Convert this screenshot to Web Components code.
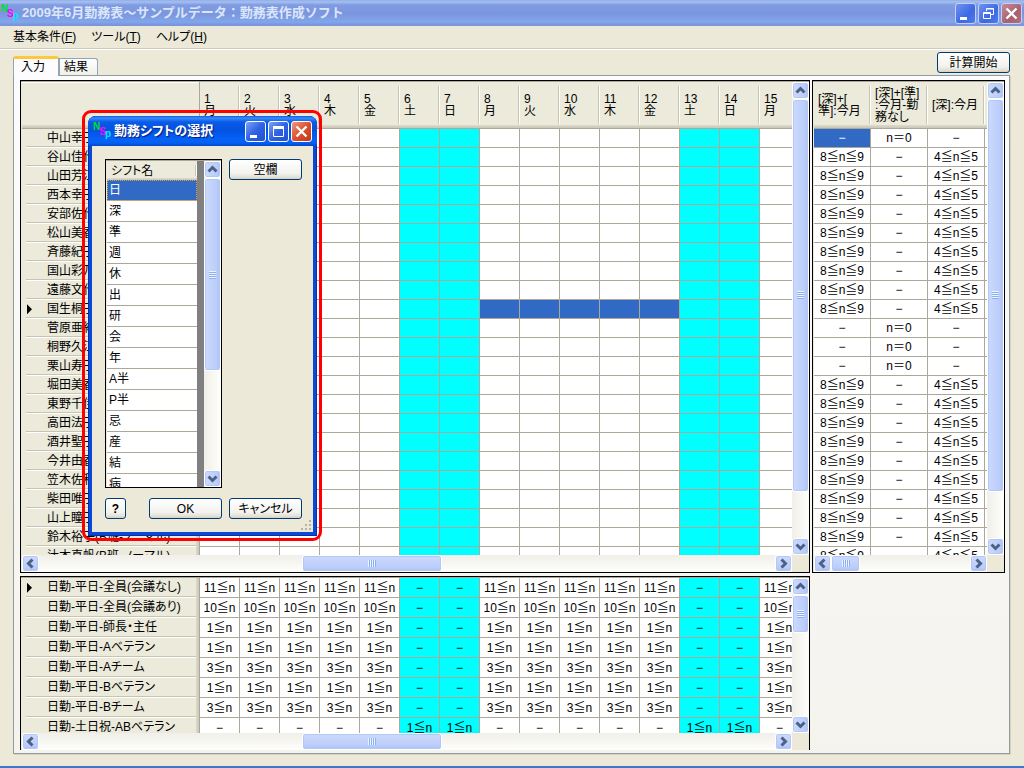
<!DOCTYPE html>
<html lang="ja">
<head>
<meta charset="utf-8">
<title>勤務表作成ソフト</title>
<style>
  body {
    margin: 0;
    background: #ece9d8;
    color: #000;
    font: 12px/18px "Liberation Sans", "Noto Sans CJK JP", sans-serif;
    font-feature-settings: "palt";
    overflow: hidden;
  }
</style>
</head>
<body>
<duty-app></duty-app>

<script>
class XpTitlebar extends HTMLElement {
  constructor() {
    super();
    this.attachShadow({ mode: "open" });
  }

  static get styles() {
    return /* css */`
      :host {
        --bar: linear-gradient(#93aeea, #a5bff0 2px, #7f9be2 5px, #7b96df 14px, #83a6ea 22px, #7b99e2 24px, #7a92d6);
        --button: linear-gradient(135deg, #6f93ef, #3c68e4 60%, #4f7cf0);
        --close: linear-gradient(135deg, #c48a97, #a8616f 60%, #b3707c);
        --edge: #c3d0f3;
        display: flex;
        align-items: center;
        height: 26px;
        padding: 0 2px 0 1px;
        background: var(--bar);
        color: #dce6fa;
        font-size: 13px;
        font-weight: bold;
        font-feature-settings: normal;
        flex: none;
      }

      :host([active]) {
        --bar: linear-gradient(#0a5ae0, #3b8cfb 2px, #0a5be8 6px, #0352e0 14px, #0663f8 24px, #0560f0 27px, #0145c8);
        --button: linear-gradient(135deg, #7ba2f5, #2f62e4 50%, #1f52d2);
        --close: linear-gradient(135deg, #f09a82, #dc5030 50%, #c23a16);
        --edge: #fff;
        height: 30px;
        padding: 0 5px;
        color: #fff;
        font-feature-settings: "palt";
        text-shadow: 1px 1px 1px #0a1883;
      }

      .logo {
        width: 18px;
        height: 18px;
        margin-right: 3px;
        text-shadow: none;
      }

      .logo text {
        font: bold 10px "Liberation Sans", sans-serif;
      }

      .title {
        flex: 1;
        white-space: nowrap;
      }

      .buttons {
        display: flex;
        gap: 2px;
      }

      button {
        width: 21px;
        height: 21px;
        padding: 0;
        border: 1px solid var(--edge);
        border-radius: 3px;
        background: var(--button);
      }

      button.close {
        background: var(--close);
      }

      button svg {
        display: block;
        width: 19px;
        height: 19px;
        fill: none;
        stroke: #fff;
      }
    `;
  }

  connectedCallback() {
    this.render();
  }

  render() {
    const size = this.hasAttribute("maximized")
      ? `<path d="M7.5 7V4.5h7v6H12M7 5h8" /><path d="M4.5 8.5h7v6h-7zM4 9.5h8" />`
      : `<path d="M4.5 4.5h10v10h-10z" /><path d="M4 5.5h11" stroke-width="3" />`;

    this.shadowRoot.innerHTML = /* html */`
    <style>${XpTitlebar.styles}</style>
    <svg class="logo" viewBox="0 0 18 18">
      <text x="0" y="8" fill="#00e020">N</text>
      <text x="6" y="13" fill="#f0f">S</text>
      <text x="12" y="15" fill="#00e8ff">p</text>
    </svg>
    <span class="title"><slot></slot></span>
    <div class="buttons">
      <button aria-label="最小化"><svg viewBox="0 0 19 19"><path d="M4 14.5h7" stroke-width="3" /></svg></button>
      <button aria-label="サイズ変更"><svg viewBox="0 0 19 19">${size}</svg></button>
      <button class="close" aria-label="閉じる"><svg viewBox="0 0 19 19"><path d="M4.5 4.5l10 10M14.5 4.5l-10 10" stroke-width="2.4" /></svg></button>
    </div>`;
  }
}

class XpMenubar extends HTMLElement {
  constructor() {
    super();
    this.attachShadow({ mode: "open" });
  }

  static get styles() {
    return /* css */`
      :host {
        display: flex;
        align-items: center;
        gap: 15px;
        height: 22px;
        padding: 0 13px;
        border-bottom: 1px solid #cdcabb;
        box-shadow: 0 1px #fff;
        margin-bottom: 1px;
        flex: none;
      }

      button {
        border: 0;
        padding: 0;
        background: none;
        color: inherit;
        font: inherit;
        font-feature-settings: inherit;
      }
    `;
  }

  connectedCallback() {
    this.shadowRoot.innerHTML = /* html */`
    <style>${XpMenubar.styles}</style>
    <button>基本条件(<u>F</u>)</button>
    <button>ツール(<u>T</u>)</button>
    <button>ヘルプ(<u>H</u>)</button>`;
  }
}

class XpButton extends HTMLElement {
  constructor() {
    super();
    this.attachShadow({ mode: "open" });
  }

  static get styles() {
    return /* css */`
      :host {
        display: block;
        width: 73px;
        height: 21px;
      }

      :host([small]) {
        width: 21px;
        font-weight: bold;
      }

      button {
        display: block;
        width: 100%;
        height: 100%;
        padding: 0;
        border: 1px solid #003c74;
        border-radius: 3px;
        background: linear-gradient(#fff, #f3f2ee 70%, #e3e0d6 90%, #d6d0c5);
        color: inherit;
        font: inherit;
        font-feature-settings: inherit;
        white-space: nowrap;
      }
    `;
  }

  connectedCallback() {
    this.shadowRoot.innerHTML = /* html */`
    <style>${XpButton.styles}</style>
    <button><slot></slot></button>`;
  }
}

class XpScrollbar extends HTMLElement {
  constructor() {
    super();
    this.attachShadow({ mode: "open" });
  }

  static get styles() {
    return /* css */`
      :host {
        --side: 90deg;
        display: flex;
        flex-direction: column;
        min-width: 0;
        min-height: 0;
        background: linear-gradient(var(--side), #f0efe9, #fefefb);
      }

      :host([horizontal]) {
        --side: 180deg;
        flex-direction: row;
      }

      button,
      .thumb {
        box-sizing: border-box;
        border: 1px solid #fff;
        border-radius: 3px;
        background: linear-gradient(var(--side), #cddafd, #b9ccfa 80%, #a9bff0);
        box-shadow: inset 0 0 0 1px #b5c8f5;
      }

      button {
        flex: none;
        width: 17px;
        height: 17px;
        padding: 0;
      }

      button svg {
        display: block;
        width: 15px;
        height: 15px;
        fill: none;
        stroke: #4d6185;
        stroke-width: 3;
      }

      .track {
        display: flex;
        flex: 1;
        flex-direction: inherit;
        min-width: 0;
        min-height: 0;
      }

      .thumb {
        display: flex;
        align-items: center;
        justify-content: center;
        min-width: 0;
        min-height: 0;
      }

      .grip {
        width: 7px;
        height: 8px;
        background: repeating-linear-gradient(#eef4fe 0 1px, #8cb0f8 1px 2px);
      }

      :host([horizontal]) .grip {
        width: 8px;
        height: 7px;
        background: repeating-linear-gradient(90deg, #eef4fe 0 1px, #8cb0f8 1px 2px);
      }
    `;
  }

  connectedCallback() {
    const start = Number(this.getAttribute("start"));
    const size = Number(this.getAttribute("size"));
    const [back, next] = this.hasAttribute("horizontal")
      ? ["M9.5 3.5l-4 4 4 4", "M5.5 3.5l4 4-4 4"]
      : ["M3.5 9.5l4-4 4 4", "M3.5 5.5l4 4 4-4"];

    this.shadowRoot.innerHTML = /* html */`
    <style>${XpScrollbar.styles}</style>
    <button aria-label="戻る"><svg viewBox="0 0 15 15"><path d="${back}" /></svg></button>
    <div class="track">
      <div style="flex: ${start} 1 0"></div>
      <div class="thumb" style="flex: ${size} 1 0"><div class="grip"></div></div>
      <div style="flex: ${1000 - start - size} 1 0"></div>
    </div>
    <button aria-label="進む"><svg viewBox="0 0 15 15"><path d="${next}" /></svg></button>`;
  }
}

/* Black frame with a clipped view and its scrollbars; v and h are "start size" in thousandths */
class XpPane extends HTMLElement {
  constructor() {
    super();
    this.attachShadow({ mode: "open" });
  }

  static get styles() {
    return /* css */`
      :host {
        display: grid;
        grid-template: minmax(0, 1fr) 17px / minmax(0, 1fr) 17px;
        box-sizing: border-box;
        min-width: 0;
        min-height: 0;
        padding: 1px 0 0 1px;
        border: 1px solid #000;
        background: linear-gradient(#aca899, #aca899) 0 0 / 100% 1px no-repeat #ece9d8;
      }

      :host([open-end]) {
        border-bottom: 0;
      }

      :host([vertical-only]) {
        grid-template-rows: minmax(0, 1fr);
      }

      .view {
        min-width: 0;
        min-height: 0;
        overflow: hidden;
        background: var(--view, #fff);
      }
    `;
  }

  connectedCallback() {
    const [vs, vz] = this.getAttribute("v").split(" ");
    const h = this.getAttribute("h");
    const bottom = h
      ? `<xp-scrollbar horizontal start="${h.split(" ")[0]}" size="${h.split(" ")[1]}"></xp-scrollbar>`
      : "";

    this.shadowRoot.innerHTML = /* html */`
    <style>${XpPane.styles}</style>
    <div class="view"><slot></slot></div>
    <xp-scrollbar start="${vs}" size="${vz}"></xp-scrollbar>
    ${bottom}`;
  }
}

class DutyTable extends HTMLElement {
  constructor() {
    super();
    this.attachShadow({ mode: "open" });
  }

  static get styles() {
    return /* css */`
      :host {
        --row: 19px;
        --line: #aca899;
        display: block;
      }

      table {
        width: 0;
        table-layout: fixed;
        border-collapse: separate;
        border-spacing: 0;
      }

      th,
      td {
        box-sizing: border-box;
        overflow: hidden;
        padding: 0;
        font-weight: normal;
        line-height: 18px;
        white-space: nowrap;
      }

      thead th {
        height: 47px;
        padding-left: 4px;
        border-bottom: 1px solid var(--line);
        background:
          linear-gradient(90deg, #c7c5b2 1px, #fff 1px) right 4px / 2px 38px no-repeat,
          linear-gradient(#dedbcb, #cbc7b8) 0 100% / 100% 3px no-repeat,
          #ebeadb;
        line-height: 12px;
        text-align: left;
      }

      thead th.corner {
        border-right: 1px solid var(--line);
        background:
          linear-gradient(#dedbcb, #cbc7b8) 0 100% / 100% 3px no-repeat,
          linear-gradient(#fff, #fff) 0 0 / 100% 1px no-repeat,
          #ebeadb;
      }

      tbody th {
        height: var(--row);
        padding: 0 0 2px 5px;
        border-right: 1px solid var(--line);
        background:
          linear-gradient(#c7c5b2 1px, #fff 1px) 4px 100% / 170px 2px no-repeat,
          linear-gradient(90deg, #dedbcb, #cbc7b8) 100% 0 / 3px 100% no-repeat,
          #ebeadb;
        line-height: 16px;
        text-align: left;
      }

      tbody th::before {
        content: "";
        display: inline-block;
        width: 20px;
        height: 10px;
        vertical-align: middle;
      }

      tbody th.current::before {
        background: #000;
        clip-path: polygon(0 0, 5px 5px, 0 10px);
      }

      td {
        height: var(--row);
        border: solid var(--line);
        border-width: 0 1px 1px 0;
        background: #fff;
        text-align: center;
      }

      td.off {
        background: #0ff;
      }

      td.selected {
        background: #316ac5;
        color: #fff;
      }

      :host([tall]) {
        --row: 20px;
      }

      :host([list]) {
        --row: 21px;
      }

      :host([list]) thead th {
        height: 19px;
        border-bottom: 0;
        background:
          linear-gradient(90deg, #c7c5b2 1px, #fff 1px) right 4px / 2px 11px no-repeat,
          linear-gradient(#dedbcb, #cbc7b8) 0 100% / 100% 2px no-repeat,
          #ebeadb;
      }

      :host([list]) td {
        padding-left: 2px;
        border-right: 0;
        text-align: left;
      }

      :host([list]) td.selected {
        outline: 1px dotted #e0a050;
        outline-offset: -1px;
      }
    `;
  }

  set data({ widths, head, rows }) {
    const cols = widths.map(w => `<col style="width: ${w}px">`).join("");
    const thead = head
      ? `<thead><tr>${head.map(h => h === null ? `<th class="corner"></th>` : `<th>${h}</th>`).join("")}</tr></thead>`
      : "";
    const cell = ({ tag = "td", text = "", cls = "" }) => `<${tag} class="${cls}">${text}</${tag}>`;

    this.shadowRoot.innerHTML = /* html */`
    <style>${DutyTable.styles}</style>
    <table>
      <colgroup>${cols}</colgroup>
      ${thead}
      <tbody>${rows.map(r => `<tr>${r.map(cell).join("")}</tr>`).join("")}</tbody>
    </table>`;
  }
}

class ShiftDialog extends HTMLElement {
  constructor() {
    super();
    this.attachShadow({ mode: "open" });
  }

  static get styles() {
    return /* css */`
      :host {
        display: block;
        padding: 3px 2px 2px 3px;
        border: 3px solid #f00;
        border-radius: 9px;
      }

      .window {
        overflow: hidden;
        border-radius: 8px 8px 0 0;
        background: #0a49d8;
        box-shadow: inset 0 0 0 1px #0831a8;
      }

      .body {
        display: grid;
        grid-template-columns: 117px 73px;
        gap: 10px 7px;
        margin: 0 4px 4px;
        padding: 13px 11px 13px 13px;
        background: #ece9d8;
        position: relative;
      }

      xp-pane {
        --view: #808080;
        height: 329px;
      }

      .left {
        display: flex;
        justify-content: space-between;
      }

      .size {
        position: absolute;
        right: 1px;
        bottom: 1px;
        width: 11px;
        height: 11px;
        fill: #b8b4a2;
      }
    `;
  }

  connectedCallback() {
    this.shadowRoot.innerHTML = /* html */`
    <style>${ShiftDialog.styles}</style>
    <div class="window" role="dialog" aria-label="勤務シフトの選択">
      <xp-titlebar active>勤務シフトの選択</xp-titlebar>
      <div class="body">
        <xp-pane vertical-only v="0 660"><duty-table list></duty-table></xp-pane>
        <xp-button>空欄</xp-button>
        <div class="left">
          <xp-button small>?</xp-button>
          <xp-button>OK</xp-button>
        </div>
        <xp-button>キャンセル</xp-button>
        <svg class="size" viewBox="0 0 11 11">
          <path d="M8 0h2v2h-2zM4 4h2v2h-2zM8 4h2v2h-2zM0 8h2v2h-2zM4 8h2v2h-2zM8 8h2v2h-2z" />
        </svg>
      </div>
    </div>`;

    const shifts = ["日", "深", "準", "週", "休", "出", "研", "会", "年", "A半", "P半", "忌", "産", "結", "病"];
    this.shadowRoot.querySelector("duty-table").data = {
      widths: [90],
      head: ["シフト名"],
      rows: shifts.map((text, i) => [{ text, cls: i === 0 ? "selected" : "" }]),
    };
  }
}

const WEEK = ["月", "火", "水", "木", "金", "土", "日"];
const DAYS = Array.from({ length: 15 }, (_, i) => ({ day: i + 1, name: WEEK[i % 7], off: i % 7 > 4 }));

const STAFF = [
  "中山幸子", "谷山佳代", "山田芳江", "西本幸子", "安部佐代", "松山美香", "斉藤紀子", "国山彩乃",
  "遠藤文代", "国生桐子", "菅原亜紀", "桐野久江", "栗山寿子", "堀田美香", "東野千佳", "高田法子",
  "酒井聖子", "今井由香", "笠木佐和", "柴田唯子", "山上瞳子", "鈴木裕子(B班-ノーマル)", "辻本真帆(B班-ノーマル)",
];

const NEEDS = [
  ["日勤-平日-全員(会議なし)", "11≦n", "−"],
  ["日勤-平日-全員(会議あり)", "10≦n", "−"],
  ["日勤-平日-師長・主任", "1≦n", "−"],
  ["日勤-平日-Aベテラン", "1≦n", "−"],
  ["日勤-平日-Aチーム", "3≦n", "−"],
  ["日勤-平日-Bベテラン", "1≦n", "−"],
  ["日勤-平日-Bチーム", "3≦n", "−"],
  ["日勤-土日祝-ABベテラン", "−", "1≦n"],
];

class DutyApp extends HTMLElement {
  constructor() {
    super();
    this.attachShadow({ mode: "open" });
  }

  static get styles() {
    return /* css */`
      :host {
        display: flex;
        flex-direction: column;
        box-sizing: border-box;
        height: 100vh;
        border-bottom: 2px solid #3a78d0;
      }

      main {
        display: flex;
        flex: 1;
        flex-direction: column;
        min-height: 0;
        padding: 0 14px 12px 13px;
      }

      .bar {
        display: flex;
        align-items: center;
        justify-content: space-between;
        height: 25px;
      }

      .tabs {
        display: flex;
        align-items: flex-end;
        align-self: flex-end;
      }

      .tabs button {
        box-sizing: border-box;
        width: 39px;
        height: 17px;
        padding: 0 4px;
        border: 1px solid #91a7b4;
        border-bottom: 0;
        border-radius: 0 3px 0 0;
        background: linear-gradient(#fff, #f0f0ea);
        color: inherit;
        font: inherit;
        line-height: 16px;
        text-align: left;
      }

      .tabs button.active {
        z-index: 1;
        width: 46px;
        height: 20px;
        margin-bottom: -1px;
        padding: 0 7px 1px;
        border-top: 3px solid #ffc73c;
        border-radius: 3px 3px 0 0;
        background: #fcfcfe;
      }

      .panel {
        display: grid;
        flex: 1;
        grid-template: minmax(0, 1fr) 174px / minmax(0, 1fr) 193px;
        gap: 3px 2px;
        min-height: 0;
        padding: 4px 4px 3px 6px;
        border: 1px solid #919b9c;
        box-shadow: 1px 1px #d5d2c2;
        background: linear-gradient(#fcfcfe, #f4f3ee);
      }

      shift-dialog {
        position: absolute;
        left: 82px;
        top: 110px;
      }
    `;
  }

  connectedCallback() {
    this.shadowRoot.innerHTML = /* html */`
    <style>${DutyApp.styles}</style>
    <xp-titlebar maximized>2009年6月勤務表～サンプルデータ：勤務表作成ソフト</xp-titlebar>
    <xp-menubar></xp-menubar>
    <main>
      <div class="bar">
        <div class="tabs" role="tablist">
          <button class="active" role="tab" aria-selected="true">入力</button>
          <button role="tab" aria-selected="false">結果</button>
        </div>
        <xp-button>計算開始</xp-button>
      </div>
      <div class="panel">
        <xp-pane v="0 894" h="358 188"><duty-table id="staff"></duty-table></xp-pane>
        <xp-pane v="0 894" h="0 200"><duty-table id="limits"></duty-table></xp-pane>
        <xp-pane open-end v="0 300" h="358 188"><duty-table id="needs" tall></duty-table></xp-pane>
      </div>
    </main>
    <shift-dialog></shift-dialog>`;

    this.fill();
  }

  fill() {
    const find = id => this.shadowRoot.getElementById(id);
    const widths = [178, ...DAYS.map(() => 40)];

    find("staff").data = {
      widths,
      head: [null, ...DAYS.map(d => `${d.day}<br>${d.name}`)],
      rows: STAFF.map((text, i) => [
        { tag: "th", text, cls: i === 9 ? "current" : "" },
        ...DAYS.map(({ day, off }) => ({
          cls: i === 9 && day > 7 && day < 13 ? "selected" : off ? "off" : "",
        })),
      ]),
    };

    find("needs").data = {
      widths,
      rows: NEEDS.map(([text, work, rest], i) => [
        { tag: "th", text, cls: i === 0 ? "current" : "" },
        ...DAYS.map(({ off }) => ({ text: off ? rest : work, cls: off ? "off" : "" })),
      ]),
    };

    find("limits").data = {
      widths: [57, 57, 57, 57],
      head: ["[深]+[<br>準]:今月", "[深]+[準]<br>:今月-勤<br>務なし", "[深]:今月", ""],
      rows: STAFF.map((_, i) => {
        const none = i === 0 || (i > 9 && i < 13);
        const texts = none ? ["−", "n＝0", "−", ""] : ["8≦n≦9", "−", "4≦n≦5", ""];
        return texts.map((text, c) => ({ text, cls: i === 0 && c === 0 ? "selected" : "" }));
      }),
    };
  }
}

customElements.define("xp-titlebar", XpTitlebar);
customElements.define("xp-menubar", XpMenubar);
customElements.define("xp-button", XpButton);
customElements.define("xp-scrollbar", XpScrollbar);
customElements.define("xp-pane", XpPane);
customElements.define("duty-table", DutyTable);
customElements.define("shift-dialog", ShiftDialog);
customElements.define("duty-app", DutyApp);
</script>
</body>
</html>
